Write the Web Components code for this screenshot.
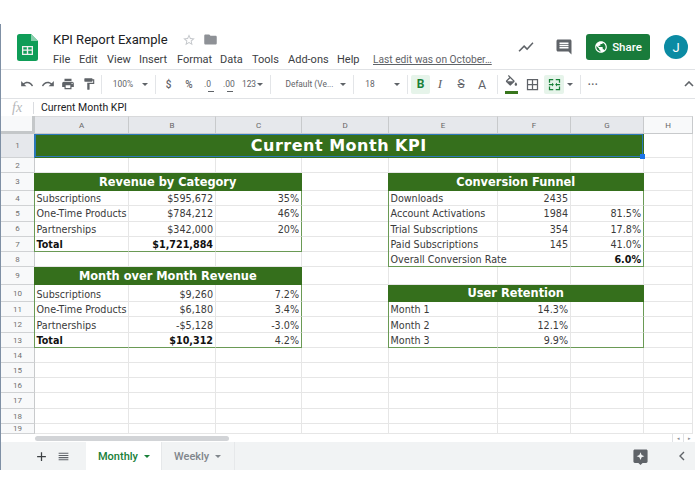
<!DOCTYPE html>
<html>
<head>
<meta charset="utf-8">
<title>KPI Report Example</title>
<style>
    html, body { margin: 0; padding: 0; background: #fff; }
</style>
</head>
<body>
<sheets-app></sheets-app>

<script>
const ICONS = {
    undo: 'M12.5 8c-2.65 0-5.05.99-6.9 2.6L2 7v9h9l-3.62-3.62c1.39-1.16 3.16-1.88 5.12-1.88 3.54 0 6.55 2.31 7.6 5.5l2.37-.78C21.08 11.03 17.15 8 12.5 8z',
    redo: 'M18.4 10.6C16.55 8.99 14.15 8 11.5 8c-4.65 0-8.58 3.03-9.96 7.22L3.9 16c1.05-3.19 4.05-5.5 7.6-5.5 1.95 0 3.73.72 5.12 1.88L13 16h9V7l-3.6 3.6z',
    print: 'M19 8H5c-1.66 0-3 1.34-3 3v6h4v4h12v-4h4v-6c0-1.66-1.34-3-3-3zm-3 11H8v-5h8v5zm3-7c-.55 0-1-.45-1-1s.45-1 1-1 1 .45 1 1-.45 1-1 1zm-1-9H6v4h12V3z',
    paint: 'M18 4V3c0-.55-.45-1-1-1H5c-.55 0-1 .45-1 1v4c0 .55.45 1 1 1h12c.55 0 1-.45 1-1V6h1v4H9v11c0 .55.45 1 1 1h2c.55 0 1-.45 1-1v-9h8V4h-3z',
    comment: 'M21.99 4c0-1.1-.89-2-1.99-2H4c-1.1 0-2 .9-2 2v12c0 1.1.9 2 2 2h14l4 4-.01-18zM18 14H6v-2h12v2zm0-3H6V9h12v2zm0-3H6V6h12v2z',
    globe: 'M12 2C6.48 2 2 6.48 2 12s4.48 10 10 10 10-4.48 10-10S17.52 2 12 2zm-1 17.93c-3.95-.49-7-3.85-7-7.93 0-.62.08-1.21.21-1.79L9 15v1c0 1.1.9 2 2 2v1.93zm6.9-2.54c-.26-.81-1-1.39-1.9-1.39h-1v-3c0-.55-.45-1-1-1H8v-2h2c.55 0 1-.45 1-1V7h2c1.1 0 2-.9 2-2v-.41c2.93 1.19 5 4.06 5 7.41 0 2.08-.8 3.97-2.1 5.39z',
    chart: 'M3.5 18.49l6-6.01 4 4L22 6.92l-1.41-1.41-7.09 7.97-4-4L2 16.99z',
    folder: 'M10 4H4c-1.1 0-1.99.9-1.99 2L2 18c0 1.1.9 2 2 2h16c1.1 0 2-.9 2-2V8c0-1.1-.9-2-2-2h-8l-2-2z',
    star: 'M22 9.24l-7.19-.62L12 2 9.19 8.63 2 9.24l5.46 4.73L5.82 21 12 17.27 18.18 21l-1.63-7.03L22 9.24zM12 15.4l-3.76 2.27 1-4.28-3.32-2.88 4.38-.38L12 6.1l1.71 4.04 4.38.38-3.32 2.88 1 4.28L12 15.4z',
    borders: 'M3 3v18h18V3H3zm8 16H5v-6h6v6zm0-8H5V5h6v6zm8 8h-6v-6h6v6zm0-8h-6V5h6v6z',
    merge: 'M3 3h7v2H5v4H3V3zm11 0h7v6h-2V5h-5V3zM3 15h2v4h5v2H3v-6zm16 0h2v6h-7v-2h5v-4zM3 11h5V9l3 3-3 3v-2H3v-2zm18 0v2h-5v2l-3-3 3-3v2h5z',
    fill: 'M16.56 8.94L7.62 0 6.21 1.41l2.38 2.38-5.15 5.15c-.59.59-.59 1.54 0 2.12l5.5 5.5c.29.29.68.44 1.06.44s.77-.15 1.06-.44l5.5-5.5c.59-.58.59-1.53 0-2.12zM5.21 10L10 5.21 14.79 10H5.21zM19 11.5s-2 2.17-2 3.5c0 1.1.9 2 2 2s2-.9 2-2c0-1.33-2-3.5-2-3.5z',
    list: 'M3 5h18v2H3V5zm0 4h18v2H3V9zm0 4h18v2H3v-2zm0 4h18v2H3v-2z',
    plus: 'M19 13h-6v6h-2v-6H5v-2h6V5h2v6h6v2z',
    explore: 'M20 2H4c-1.1 0-2 .9-2 2v15c0 1.1.9 2 2 2h5l3 3 3-3h5c1.1 0 2-.9 2-2V4c0-1.1-.9-2-2-2zm-8 4l1.6 3.9L17.5 11.5l-3.9 1.6L12 17l-1.6-3.9-3.9-1.6 3.9-1.6L12 6z'
};

class SvgIcon extends HTMLElement {
    connectedCallback() {
        const size = this.getAttribute('size') || 16;
        const color = this.getAttribute('color') || '#5f6368';
        this.attachShadow({mode: 'open'}).innerHTML = `
            <style>
                :host { display: inline-flex; flex: none; }
                svg { display: block; }
            </style>
            <svg width="${size}" height="${size}" viewBox="0 0 24 24" fill="${color}"><path d="${ICONS[this.getAttribute('name')]}"/></svg>
        `;
    }
}
customElements.define('svg-icon', SvgIcon);

// one toolbar slot: a fixed width box with the content centred in it
class ToolItem extends HTMLElement {
    connectedCallback() {
        const w = this.getAttribute('w');
        const gap = this.getAttribute('gap') || 0;
        this.attachShadow({mode: 'open'}).innerHTML = `
            <style>
                :host {
                    display: flex;
                    flex: none;
                    align-items: center;
                    justify-content: center;
                    width: ${w}px;
                    margin-left: ${gap}px;
                    height: 19px;
                    border-radius: 2px;
                    color: #5f6368;
                    white-space: nowrap;
                }
                :host([on]) { background: #e6f4ea; }
                :host([sep])::after {
                    content: "";
                    width: 1px;
                    height: 19px;
                    background: #e3e5e8;
                }
                :host([caret])::after {
                    content: "";
                    border-left: 3px solid transparent;
                    border-right: 3px solid transparent;
                    border-top: 3.5px solid #5f6368;
                }
            </style>
            <slot></slot>
        `;
    }
}
customElements.define('tool-item', ToolItem);

class AppHeader extends HTMLElement {
    constructor() {
        super();
        this.attachShadow({mode: 'open'}).innerHTML = `
            <style>
                :host {
                    display: flex;
                    height: 46px;
                    box-sizing: border-box;
                    border-bottom: 1px solid #e0e2e5;
                    font-family: Roboto, "Liberation Sans", sans-serif;
                    padding-left: 16px;
                }
                .logo { margin-top: 10px; flex: none; }
                .main { margin-left: 15px; padding-top: 6px; flex: none; width: 456px; }
                .title { display: flex; align-items: center; height: 19px; }
                .title span { font-size: 13px; color: #202124; width: 129px; }
                .title svg-icon { margin-right: 7px; }
                .menu { display: flex; align-items: center; height: 17px; margin-top: 2px; font-size: 11px; color: #3c4043; }
                .menu span { flex: none; }
                .last { color: #5f6368; text-decoration: underline; margin-left: 21px; font-size: 10.2px; }
                .actions { display: flex; align-items: center; height: 26px; margin-top: 10px; }
                .chart { margin-left: 8px; }
                .comment { margin-left: 20px; }
                .share {
                    display: flex;
                    align-items: center;
                    justify-content: center;
                    gap: 4px;
                    width: 64px;
                    height: 26px;
                    margin-left: 13px;
                    background: #197b3b;
                    color: #fff;
                    border-radius: 3px;
                    font-size: 11.5px;
                    font-weight: 500;
                }
                .avatar {
                    display: flex;
                    align-items: center;
                    justify-content: center;
                    width: 24px;
                    height: 24px;
                    margin-left: 14px;
                    border-radius: 50%;
                    background: #0b8ba3;
                    color: #fff;
                    font-size: 13px;
                }
            </style>
            <svg class="logo" width="21" height="27" viewBox="0 0 21 27">
                <path d="M2.5 0H14l7 7v17.5a2.5 2.5 0 0 1-2.5 2.5h-16A2.5 2.5 0 0 1 0 24.5v-22A2.5 2.5 0 0 1 2.5 0z" fill="#0f9d58"/>
                <path d="M14 0l7 7h-7z" fill="#87ceac"/>
                <path d="M5 12h11v9H5zm1.3 1.3v2.2h3.5v-2.2zm4.9 0v2.2h3.5v-2.2zm-4.9 3.5v2.9h3.5v-2.9zm4.9 0v2.9h3.5v-2.9z" fill="#f1f1f1" fill-rule="evenodd"/>
            </svg>
            <div class="main">
                <div class="title">
                    <span>KPI Report Example</span>
                    <svg-icon name="star" size="14" color="#c4c7cb"></svg-icon>
                    <svg-icon name="folder" size="15" color="#8e9196"></svg-icon>
                </div>
                <div class="menu">
                    <span style="width:26px">File</span>
                    <span style="width:28px">Edit</span>
                    <span style="width:32px">View</span>
                    <span style="width:38px">Insert</span>
                    <span style="width:43px">Format</span>
                    <span style="width:32px">Data</span>
                    <span style="width:36px">Tools</span>
                    <span style="width:49px">Add-ons</span>
                    <span style="width:15px">Help</span>
                    <span class="last">Last edit was on October…</span>
                </div>
            </div>
            <div class="actions">
                <svg-icon class="chart" name="chart" size="18" color="#5f6368"></svg-icon>
                <svg-icon class="comment" name="comment" size="18" color="#5f6368"></svg-icon>
                <div class="share"><svg-icon name="globe" size="14" color="#fff"></svg-icon>Share</div>
                <div class="avatar">J</div>
            </div>
        `;
    }
}
customElements.define('app-header', AppHeader);

class AppToolbar extends HTMLElement {
    constructor() {
        super();
        this.attachShadow({mode: 'open'}).innerHTML = `
            <style>
                :host {
                    display: flex;
                    align-items: center;
                    height: 29px;
                    box-sizing: border-box;
                    border-bottom: 1px solid #e0e2e5;
                    padding-left: 16px;
                    font-family: Roboto, "Liberation Sans", sans-serif;
                    font-size: 8.4px;
                    color: #5f6368;
                }
                .sub { position: relative; font-size: 8.5px; }
                .sub::after {
                    content: "";
                    position: absolute;
                    left: 4px;
                    bottom: -3px;
                    width: 6px;
                    height: 1px;
                    background: #5f6368;
                }
                .sym { font-size: 10px; font-weight: 500; }
                .b { font: 700 12px Roboto, sans-serif; color: #188038; }
                .i { font: italic 500 13px "Liberation Serif", serif; }
                .s { font-size: 12px; text-decoration: line-through; }
                .a { font-size: 12.5px; }
                .fill { position: relative; display: flex; height: 19px; }
                .fill::after {
                    content: "";
                    position: absolute;
                    left: 1px;
                    right: 1px;
                    bottom: 0;
                    height: 3px;
                    background: #38761d;
                }
                .dots { letter-spacing: 0.5px; font-weight: 700; font-size: 10px; }
                .up { margin-left: 81px; flex: none; }
            </style>
            <tool-item w="20"><svg-icon name="undo" size="14"></svg-icon></tool-item>
            <tool-item w="21"><svg-icon name="redo" size="14"></svg-icon></tool-item>
            <tool-item w="19"><svg-icon name="print" size="14"></svg-icon></tool-item>
            <tool-item w="19" gap="2"><svg-icon name="paint" size="14"></svg-icon></tool-item>
            <tool-item w="6" sep></tool-item>
            <tool-item w="38">100%</tool-item>
            <tool-item w="6" caret></tool-item>
            <tool-item w="6" gap="4" sep></tool-item>
            <tool-item w="21"><span class="sym">$</span></tool-item>
            <tool-item w="20"><span class="sym">%</span></tool-item>
            <tool-item w="17"><span class="sub">.0</span></tool-item>
            <tool-item w="26"><span class="sub">.00</span></tool-item>
            <tool-item w="14">123</tool-item>
            <tool-item w="8" caret></tool-item>
            <tool-item w="6" gap="3" sep></tool-item>
            <tool-item w="53" gap="10">Default (Ve...</tool-item>
            <tool-item w="14" caret></tool-item>
            <tool-item w="6" sep></tool-item>
            <tool-item w="28">18</tool-item>
            <tool-item w="14" gap="6" caret></tool-item>
            <tool-item w="6" sep></tool-item>
            <tool-item w="19" gap="1" on><span class="b">B</span></tool-item>
            <tool-item w="20"><span class="i">I</span></tool-item>
            <tool-item w="22"><span class="s">S</span></tool-item>
            <tool-item w="20"><span class="a">A</span></tool-item>
            <tool-item w="6" gap="2" sep></tool-item>
            <tool-item w="22"><span class="fill"><svg-icon name="fill" size="15"></svg-icon></span></tool-item>
            <tool-item w="20"><svg-icon name="borders" size="15"></svg-icon></tool-item>
            <tool-item w="20" gap="2" on><svg-icon name="merge" size="15" color="#188038"></svg-icon></tool-item>
            <tool-item w="12" caret></tool-item>
            <tool-item w="6" gap="1" sep></tool-item>
            <tool-item w="20"><span class="dots">···</span></tool-item>
            <svg class="up" width="10" height="6" viewBox="0 0 10 6"><path d="M1 5l4-4 4 4" fill="none" stroke="#5f6368" stroke-width="1.6"/></svg>
        `;
    }
}
customElements.define('app-toolbar', AppToolbar);

class FormulaBar extends HTMLElement {
    constructor() {
        super();
        this.attachShadow({mode: 'open'}).innerHTML = `
            <style>
                :host {
                    display: flex;
                    align-items: center;
                    height: 17px;
                    font-family: Roboto, "Liberation Sans", sans-serif;
                    font-size: 10.5px;
                    color: #202124;
                }
                .fx {
                    width: 32px;
                    padding-left: 11px;
                    box-sizing: border-box;
                    font: italic 14px "Liberation Serif", serif;
                    color: #b5b7ba;
                }
                .bar { width: 1px; height: 12px; background: #dadce0; margin-right: 7px; }
            </style>
            <span class="fx">fx</span>
            <span class="bar"></span>
            <slot></slot>
        `;
    }
}
customElements.define('formula-bar', FormulaBar);

const COLS = ['A', 'B', 'C', 'D', 'E', 'F', 'G', 'H'];
const GREEN = '#356f1c';
const FRAME = '#6a9a55';

// rows: which cell holds what. head = green title, r = right aligned, b = bold, low = sits lower in a tall row
const SHEET_ROWS = {
    1: [{c: 0, span: 7, t: 'Current Month KPI', k: 'main sel'}],
    3: [{c: 0, span: 3, t: 'Revenue by Category', k: 'head'}, {c: 4, span: 3, t: 'Conversion Funnel', k: 'head'}],
    4: [{c: 0, t: 'Subscriptions'}, {c: 1, t: '$595,672', k: 'r'}, {c: 2, t: '35%', k: 'r'},
        {c: 4, t: 'Downloads'}, {c: 5, t: '2435', k: 'r'}, {c: 6, t: ''}],
    5: [{c: 0, t: 'One-Time Products'}, {c: 1, t: '$784,212', k: 'r'}, {c: 2, t: '46%', k: 'r'},
        {c: 4, t: 'Account Activations'}, {c: 5, t: '1984', k: 'r'}, {c: 6, t: '81.5%', k: 'r'}],
    6: [{c: 0, t: 'Partnerships'}, {c: 1, t: '$342,000', k: 'r'}, {c: 2, t: '20%', k: 'r'},
        {c: 4, t: 'Trial Subscriptions'}, {c: 5, t: '354', k: 'r'}, {c: 6, t: '17.8%', k: 'r'}],
    7: [{c: 0, t: 'Total', k: 'b'}, {c: 1, t: '$1,721,884', k: 'r b'}, {c: 2, t: ''},
        {c: 4, t: 'Paid Subscriptions'}, {c: 5, t: '145', k: 'r'}, {c: 6, t: '41.0%', k: 'r'}],
    8: [{c: 4, span: 2, t: 'Overall Conversion Rate'}, {c: 6, t: '6.0%', k: 'r b'}],
    9: [{c: 0, span: 3, t: 'Month over Month Revenue', k: 'head'}],
    10: [{c: 0, t: 'Subscriptions', k: 'low'}, {c: 1, t: '$9,260', k: 'r low'}, {c: 2, t: '7.2%', k: 'r low'},
        {c: 4, span: 3, t: 'User Retention', k: 'head'}],
    11: [{c: 0, t: 'One-Time Products'}, {c: 1, t: '$6,180', k: 'r'}, {c: 2, t: '3.4%', k: 'r'},
        {c: 4, t: 'Month 1'}, {c: 5, t: '14.3%', k: 'r'}, {c: 6, t: ''}],
    12: [{c: 0, t: 'Partnerships'}, {c: 1, t: '-$5,128', k: 'r'}, {c: 2, t: '-3.0%', k: 'r'},
        {c: 4, t: 'Month 2'}, {c: 5, t: '12.1%', k: 'r'}, {c: 6, t: ''}],
    13: [{c: 0, t: 'Total', k: 'b'}, {c: 1, t: '$10,312', k: 'r b'}, {c: 2, t: '4.2%', k: 'r'},
        {c: 4, t: 'Month 3'}, {c: 5, t: '9.9%', k: 'r'}, {c: 6, t: ''}]
};
const ROW_HEIGHTS = [24, 15, 18, 15, 15.5, 15.5, 15, 15, 18, 17, 15, 16, 15, 15, 15, 15, 16, 15, 10];
// framed tables: first row, last row, first col, last col
const FRAMES = [[4, 7, 0, 2], [10, 13, 0, 2], [4, 8, 4, 6], [11, 13, 4, 6]];

class SheetGrid extends HTMLElement {
    constructor() {
        super();
        let cells = '<div class="corner"></div>';
        COLS.forEach((col, i) => {
            cells += `<div class="colhead ${i < 7 ? 'on' : ''}">${col}</div>`;
        });
        cells += '<div class="colend"></div>';

        ROW_HEIGHTS.forEach((h, r) => {
            const row = r + 1;
            cells += `<div class="rowhead ${row === 1 ? 'on' : ''}" style="grid-row:${row + 1}">${row}</div>`;
            const given = SHEET_ROWS[row] || [];
            for (let c = 0; c < 8; c++) {
                const cell = given.find(x => x.c === c);
                if (given.some(x => x.span && c > x.c && c < x.c + x.span)) continue;
                const span = cell && cell.span ? cell.span : 1;
                let kind = cell && cell.k ? cell.k : '';
                FRAMES.forEach(([r1, r2, c1, c2]) => {
                    if (row < r1 || row > r2 || c < c1 || c > c2) return;
                    if (c === c1) kind += ' fl';
                    if (c + span - 1 === c2) kind += ' fr';
                    if (row === r2) kind += ' fb';
                });
                const inner = kind.includes('sel') ? '<i class="handle"></i>' : '';
                cells += `<div class="cell ${kind}" style="grid-row:${row + 1};grid-column:${c + 2} / span ${span}">${cell ? cell.t : ''}${inner}</div>`;
            }
        });

        this.attachShadow({mode: 'open'}).innerHTML = `
            <style>
                :host {
                    display: block;
                    height: 318px;
                    overflow: hidden;
                }
                .grid {
                    display: grid;
                    grid-template-columns: 34px 94px 87px 86px 87px 109px 73px 73px 49px 1px;
                    grid-template-rows: 18px ${ROW_HEIGHTS.map(h => h + 'px').join(' ')};
                    font-family: "DejaVu Sans", Verdana, sans-serif;
                    font-size: 9.6px;
                    color: #3a3a3a;
                }
                .corner {
                    background: #f8f9fa;
                    border-right: 3px solid #c4c7c9;
                    border-bottom: 3px solid #c4c7c9;
                    box-sizing: border-box;
                }
                .colhead {
                    display: flex;
                    align-items: center;
                    justify-content: center;
                    background: #f8f9fa;
                    border-right: 1px solid #c8cacc;
                    border-bottom: 1px solid #c8cacc;
                    border-top: 1px solid #d8d9db;
                    box-sizing: border-box;
                    font: 8px Roboto, sans-serif;
                    color: #666;
                }
                .colhead.on { background: #e6e8ec; }
                .colend { background: #fff; }
                .rowhead {
                    grid-column: 1;
                    display: flex;
                    align-items: center;
                    justify-content: center;
                    background: #f8f9fa;
                    border-right: 1px solid #c8cacc;
                    border-bottom: 1px solid #d0d2d4;
                    box-sizing: border-box;
                    font: 8px Roboto, sans-serif;
                    color: #707070;
                }
                .rowhead.on { background: #e6e8ec; }
                .cell {
                    display: flex;
                    align-items: center;
                    padding: 1px 2px 0 1.5px;
                    min-width: 0;
                    white-space: nowrap;
                    box-sizing: border-box;
                    border-right: 1px solid #e6e6e6;
                    border-bottom: 1px solid #e6e6e6;
                    position: relative;
                }
                .r { justify-content: flex-end; }
                .b { font-weight: 700; color: #111; }
                .low { padding-top: 3px; }
                .head, .main {
                    justify-content: center;
                    padding-top: 0;
                    background: ${GREEN};
                    border-color: ${GREEN};
                    color: #fff;
                    font-weight: 700;
                }
                .head { font-size: 11.4px; box-shadow: -1px 0 0 ${GREEN}; }
                .main { font-size: 16px; letter-spacing: 0.5px; }
                .fl { box-shadow: -1px 0 0 ${FRAME}; }
                .fr { border-right-color: ${FRAME}; }
                .fb { border-bottom-color: ${FRAME}; }
                .sel { box-shadow: inset 0 0 0 1px #2b78b8, -1px 0 0 #2b78b8; z-index: 1; }
                .handle {
                    position: absolute;
                    right: -2px;
                    bottom: -2px;
                    width: 5px;
                    height: 5px;
                    background: #1a73e8;
                }
            </style>
            <div class="grid">${cells}</div>
        `;
    }
}
customElements.define('sheet-grid', SheetGrid);

class GridScroll extends HTMLElement {
    constructor() {
        super();
        this.attachShadow({mode: 'open'}).innerHTML = `
            <style>
                :host {
                    display: flex;
                    align-items: center;
                    height: 8px;
                    padding-left: 34px;
                    box-sizing: border-box;
                    background: #fff;
                }
                .thumb { width: 194px; height: 5px; border-radius: 3px; background: #d2d4d7; }
                .arrows { margin-left: auto; margin-right: 1px; display: flex; height: 8px; font: 5px Roboto, sans-serif; color: #8a8d91; }
                .arrows span {
                    display: flex;
                    align-items: center;
                    justify-content: center;
                    width: 11px;
                    border-left: 1px solid #e0e2e5;
                    box-sizing: border-box;
                }
            </style>
            <div class="thumb"></div>
            <div class="arrows"><span>◂</span><span>▸</span></div>
        `;
    }
}
customElements.define('grid-scroll', GridScroll);

class SheetTab extends HTMLElement {
    constructor() {
        super();
        this.attachShadow({mode: 'open'}).innerHTML = `
            <style>
                :host {
                    display: flex;
                    align-items: center;
                    box-sizing: border-box;
                    height: 28px;
                    padding: 0 10px 0 12px;
                    gap: 6px;
                    font-size: 11px;
                    font-weight: 500;
                    color: #80868b;
                    border-right: 1px solid #e6e8ea;
                }
                :host([active]) { background: #fff; color: #188038; }
                i {
                    border-left: 3px solid transparent;
                    border-right: 3px solid transparent;
                    border-top: 3.5px solid currentColor;
                }
            </style>
            <slot></slot><i></i>
        `;
    }
}
customElements.define('sheet-tab', SheetTab);

class SheetTabs extends HTMLElement {
    constructor() {
        super();
        this.attachShadow({mode: 'open'}).innerHTML = `
            <style>
                :host {
                    display: flex;
                    align-items: center;
                    height: 28px;
                    background: #f1f3f4;
                    font-family: Roboto, "Liberation Sans", sans-serif;
                    padding-left: 33px;
                }
                .add { width: 23px; }
                .list { width: 29px; }
                sheet-tab[active] { width: 76px; }
                sheet-tab.week { width: 73px; }
                .explore { margin-left: auto; }
                .back { margin: 0 10px 0 30px; }
            </style>
            <svg-icon class="add" name="plus" size="15" color="#3c4043"></svg-icon>
            <svg-icon class="list" name="list" size="13" color="#5f6368"></svg-icon>
            <sheet-tab active>Monthly</sheet-tab>
            <sheet-tab class="week">Weekly</sheet-tab>
            <svg-icon class="explore" name="explore" size="17" color="#5f6368"></svg-icon>
            <svg class="back" width="6" height="10" viewBox="0 0 6 10"><path d="M5 1L1 5l4 4" fill="none" stroke="#5f6368" stroke-width="1.4"/></svg>
        `;
    }
}
customElements.define('sheet-tabs', SheetTabs);

class SheetsApp extends HTMLElement {
    constructor() {
        super();
        this.attachShadow({mode: 'open'}).innerHTML = `
            <style>
                :host { display: block; padding-top: 24px; height: 494px; box-sizing: border-box; overflow: hidden; }
                .win { border-left: 1px solid #7f90a5; }
            </style>
            <div class="win">
                <app-header></app-header>
                <app-toolbar></app-toolbar>
                <formula-bar>Current Month KPI</formula-bar>
                <sheet-grid></sheet-grid>
                <grid-scroll></grid-scroll>
                <sheet-tabs></sheet-tabs>
            </div>
        `;
    }
}
customElements.define('sheets-app', SheetsApp);
</script>
</body>
</html>
